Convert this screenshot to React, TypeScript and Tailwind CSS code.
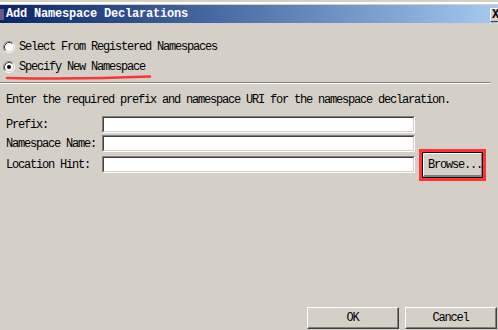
import React from "react";

function Radio({ checked }: { checked?: boolean }) {
  return (
    <svg width="12" height="12" viewBox="0 0 12 12" className="shrink-0">
      <circle cx="6" cy="6" r="5" fill="#ffffff" />
      <path d="M2.11 9.89 A5.5 5.5 0 0 1 9.89 2.11" fill="none" stroke="#808080" strokeWidth="1" />
      <path d="M9.89 2.11 A5.5 5.5 0 0 1 2.11 9.89" fill="none" stroke="#ffffff" strokeWidth="1" />
      <path d="M2.82 9.18 A4.5 4.5 0 0 1 9.18 2.82" fill="none" stroke="#404040" strokeWidth="1" />
      <path d="M9.18 2.82 A4.5 4.5 0 0 1 2.82 9.18" fill="none" stroke="#d4d0c8" strokeWidth="1" />
      {checked && <circle cx="6" cy="6" r="2" fill="#000000" />}
    </svg>
  );
}

function Field() {
  return (
    <div className="w-[313px] h-[17px] bg-white border-t border-l border-t-[#808080] border-l-[#808080] border-b border-r border-b-white border-r-white">
      <div className="w-full h-full border-t border-l border-t-[#404040] border-l-[#404040] border-b border-r border-b-[#d4d0c8] border-r-[#d4d0c8]" />
    </div>
  );
}

function Btn({ label }: { label: string }) {
  return (
    <div className="w-[92px] h-[22px] bg-[#d4d0c8] border-t border-l border-t-white border-l-white border-b border-r border-b-[#404040] border-r-[#404040]">
      <div className="w-full h-full flex items-center justify-center border-b border-r border-b-[#808080] border-r-[#808080]">
        {label}
      </div>
    </div>
  );
}

export default function App() {
  return (
    <div className="w-[498px] h-[330px] bg-[#d4d0c8] flex flex-col overflow-hidden font-['Liberation_Mono',monospace] text-[12px] tracking-[-1.2px] text-black leading-[14px]">
      <div className="h-[5px] shrink-0">
        <div className="mt-[2px] h-[2px] bg-white" />
      </div>
      <div className="h-[18px] shrink-0 flex items-center bg-gradient-to-r from-[#0a246a] to-[#a6caf0] overflow-hidden">
        <div className="w-[4px] h-[11px] bg-[#6b5a86] shrink-0" />
        <div className="ml-[2px] text-white font-bold tracking-[-0.2px] text-[12px]">Add Namespace Declarations</div>
        <div className="flex-1" />
        <div className="w-[16px] h-[14px] -mr-[8px] mt-[1px] bg-[#d4d0c8] border-t border-l border-t-white border-l-white border-b border-r border-b-[#404040] border-r-[#404040] flex items-center pl-[1px] text-[12px] font-bold leading-none tracking-normal">
          X
        </div>
      </div>

      <div className="mt-[14px] h-[20px] flex items-center pl-[3px] gap-[4px]">
        <Radio />
        <span>Select From Registered Namespaces</span>
      </div>
      <div className="relative h-[20px] flex items-center pl-[3px] gap-[4px]">
        <Radio checked />
        <span>Specify New Namespace</span>
        <svg className="absolute left-0 top-[16px]" width="160" height="8" viewBox="0 0 160 8">
          <path d="M7 5 Q80 6.5 150 3.5" fill="none" stroke="#ff3333" strokeWidth="2.5" strokeLinecap="round" />
        </svg>
      </div>
      <div className="mt-[5px] w-[491px] h-[2px] border-t border-t-[#808080] border-b border-b-white" />

      <div className="mt-[9px] pl-[6px]">
        Enter the required prefix and namespace URI for the namespace declaration.
      </div>

      <div className="mt-[9px] flex flex-col">
        <div className="h-[17px] flex items-center">
          <div className="w-[102px] pl-[6px]">Prefix:</div>
          <Field />
        </div>
        <div className="mt-[2px] h-[17px] flex items-center">
          <div className="w-[102px] pl-[6px]">Namespace Name:</div>
          <Field />
        </div>
        <div className="mt-[4px] h-[17px] flex items-center">
          <div className="w-[102px] pl-[6px]">Location Hint:</div>
          <Field />
          <div className="ml-[4px] border-[3px] border-[#ff3333] shrink-0 mt-[1px]">
            <div className="w-[61px] h-[26px] bg-[#d4d0c8] border border-black">
              <div className="w-full h-full border-t border-l border-t-white border-l-white border-b-2 border-r border-b-[#808080] border-r-[#808080] flex items-center pl-[4px]">
                Browse...
              </div>
            </div>
          </div>
        </div>
      </div>

      <div className="flex-1" />
      <div className="flex justify-end gap-[6px] pr-[1px] pb-[1px]">
        <Btn label="OK" />
        <Btn label="Cancel" />
      </div>
    </div>
  );
}
